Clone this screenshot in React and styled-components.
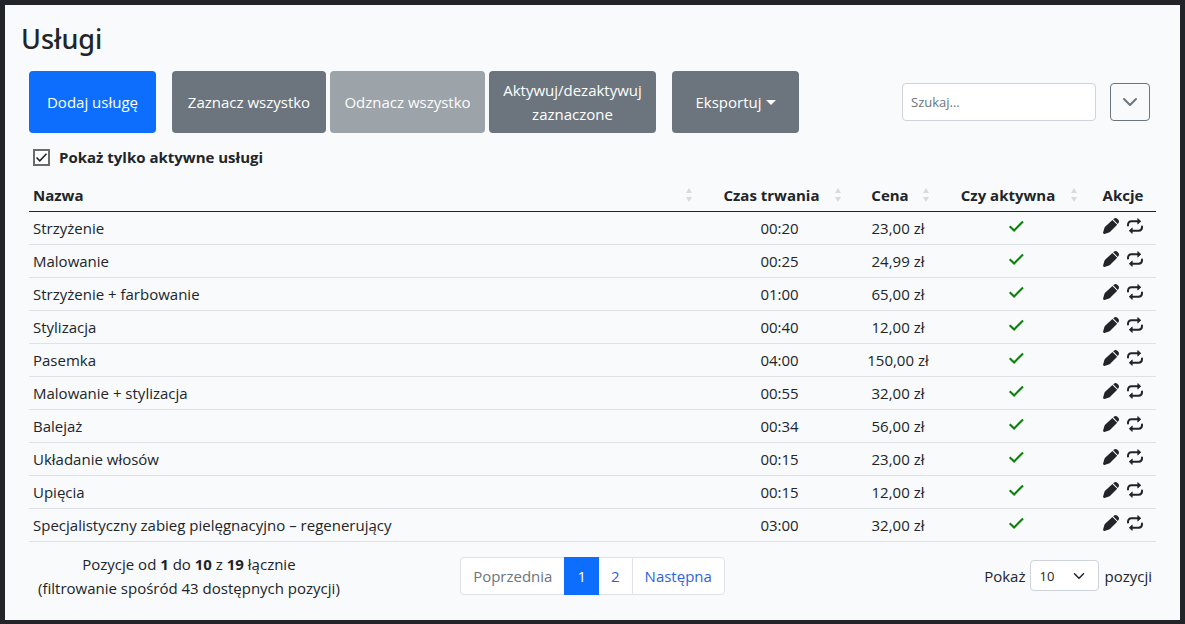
import React, { useState } from "react";
import styled, { createGlobalStyle, css } from "styled-components";

const GlobalStyle = createGlobalStyle`
  *, *::before, *::after { box-sizing: border-box; }
  body {
    margin: 0;
    background: #212529;
    color: #212529;
    font-family: "Open Sans", "Noto Sans", sans-serif;
    font-size: 15px;
    line-height: 24px;
  }
  button, input, select { font-family: inherit; }
`;

const Frame = styled.div`
  display: flex;
  min-height: 100vh;
  padding: 5px 5px 4px;
`;

const Panel = styled.main`
  flex: 1;
  min-width: 0;
  padding: 15px 24px 20px;
  background: #f8fafc;
`;

const Title = styled.h1`
  margin: 0 -8px 13px;
  font-family: "Noto Sans", "Open Sans", sans-serif;
  font-size: 27px;
  font-weight: 500;
  line-height: 38px;
`;

const Toolbar = styled.div`
  display: flex;
  align-items: center;
  gap: 16px;
`;

const ButtonGroup = styled.div`
  display: flex;
  gap: 4px;
`;

const Button = styled.button`
  display: flex;
  align-items: center;
  justify-content: center;
  gap: 4px;
  width: ${(p) => p.$width}px;
  height: 62px;
  padding: 0 4px;
  border: 0;
  border-radius: 4px;
  background: ${(p) => (p.$primary ? "#0d6efd" : "#6c757d")};
  color: #fff;
  font-size: 15px;
  line-height: 24px;
  white-space: nowrap;

  &:disabled {
    opacity: 0.65;
  }
`;

const Caret = styled.span`
  border: 5px solid transparent;
  border-top-color: currentColor;
  border-bottom: 0;
`;

const SearchArea = styled.div`
  display: flex;
  gap: 14px;
  margin-left: auto;
  padding-right: 6px;
`;

const fieldBorder = css`
  border: 1px solid #ced4da;
  border-radius: 4px;
  background: #fff;
`;

const SearchInput = styled.input`
  ${fieldBorder}
  width: 194px;
  height: 38px;
  padding: 0 8px;
  font-size: 13px;

  &::placeholder {
    color: #6c757d;
    opacity: 1;
  }
`;

const ToggleButton = styled.button`
  display: grid;
  place-items: center;
  width: 40px;
  height: 38px;
  padding: 0;
  border: 1px solid #6c757d;
  border-radius: 4px;
  background: transparent;
  color: #6c757d;
`;

const FilterLabel = styled.label`
  display: flex;
  align-items: center;
  gap: 9px;
  width: fit-content;
  margin: 12px 0 10px;
  padding-left: 4px;
  font-weight: 700;
`;

const CheckHolder = styled.span`
  position: relative;
  display: block;
  width: 17px;
  height: 17px;

  svg {
    position: absolute;
    inset: 0;
    pointer-events: none;
  }
`;

const CheckInput = styled.input`
  display: block;
  appearance: none;
  width: 17px;
  height: 17px;
  margin: 0;
  border: 2px solid #6b6b6b;
  background: #fff;
`;

const Table = styled.table`
  width: 100%;
  table-layout: fixed;
  border-collapse: separate;
  border-spacing: 0;
`;

const Col = styled.col`
  width: ${(p) => (p.$width ? `${p.$width}px` : "auto")};
`;

const HeadCell = styled.th`
  padding: 4px ${(p) => (p.$sortable ? 12 : 4)}px 4px 4px;
  border-bottom: 1px solid #212529;
  font-weight: 700;
  text-align: ${(p) => p.$align || "center"};
  white-space: nowrap;
`;

const HeadContent = styled.div`
  display: flex;
  align-items: center;

  span { flex: 1; }
`;

const Cell = styled.td`
  padding: 4px;
  border-bottom: 1px solid #dee2e6;
  text-align: ${(p) => p.$align || "center"};
`;

const IconLine = styled.div`
  display: flex;
  justify-content: center;
  align-items: center;
  gap: 8px;
  height: 24px;
  padding-bottom: 4px;
`;

const ActionButton = styled.button`
  display: block;
  padding: 0;
  border: 0;
  background: none;
  color: #212529;

  svg { display: block; }
`;

const Footer = styled.footer`
  display: grid;
  grid-template-columns: 1fr auto 1fr;
  align-items: start;
  padding-top: 10px;
`;

const Summary = styled.p`
  justify-self: start;
  margin: 0;
  padding-left: 9px;
  text-align: center;
`;

const Pagination = styled.nav`
  display: flex;
  margin-top: 5px;
`;

const PageLink = styled.a`
  height: 38px;
  padding: 6px 12px;
  margin-left: -1px;
  border: 1px solid ${(p) => (p.$active ? "#0d6efd" : "#dee2e6")};
  background: ${(p) => (p.$active ? "#0d6efd" : "#fff")};
  color: ${(p) => (p.$active ? "#fff" : p.$muted ? "#6c757d" : "#2f62e0")};
  text-decoration: none;
  z-index: ${(p) => (p.$active ? 1 : 0)};

  &:first-child { margin-left: 0; border-radius: 4px 0 0 4px; }
  &:last-child { border-radius: 0 4px 4px 0; }
`;

const PageSize = styled.label`
  display: flex;
  align-items: center;
  justify-self: end;
  gap: 5px;
  margin-top: 8px;
  padding-right: 4px;
`;

const SelectHolder = styled.span`
  position: relative;
  display: block;

  svg {
    position: absolute;
    top: 10px;
    right: 14px;
    pointer-events: none;
  }
`;

const Select = styled.select`
  ${fieldBorder}
  display: block;
  appearance: none;
  width: 69px;
  height: 31px;
  padding: 0 8px;
  color: #212529;
  font-size: 13px;
`;

const Chevron = ({ size }) => (
  <svg width={size} height={size} viewBox="0 0 16 16" fill="none" stroke="currentColor" strokeWidth="2" strokeLinecap="round" strokeLinejoin="round" aria-hidden="true">
    <path d="M2 5l6 6 6-6" />
  </svg>
);

const SortIcon = () => (
  <svg width="8" height="14" viewBox="0 0 8 14" fill="#d8dbde" aria-hidden="true">
    <path d="M4 0l3 5H1zM4 14l3-5H1z" />
  </svg>
);

const ActiveIcon = () => (
  <svg width="16" height="16" viewBox="0 0 16 16" fill="none" stroke="#0b800b" strokeWidth="2.1" role="img" aria-label="Tak">
    <path d="M1.7 8.2l4.4 4.3L15 3.6" />
  </svg>
);

const PencilIcon = () => (
  <svg width="16" height="16" viewBox="0 0 16 16" fill="currentColor" aria-hidden="true">
    <path d="M9.4 1.9l4.8 4.8-7 7c-.4.4-.8.7-1.3.9l-4.4 1.3c-.8.3-1.6-.5-1.4-1.3l1.2-4.4c.1-.5.4-1 .8-1.4z" />
    <path d="M10.2 1.2l.6-.5c1.1-.9 2.5-.9 3.5 0l1 1c.9 1 .9 2.4 0 3.5l-.5.7z" />
  </svg>
);

const RepeatIcon = () => (
  <svg width="16" height="16" viewBox="0 0 16 16" fill="none" stroke="currentColor" strokeWidth="2" strokeLinecap="round" aria-hidden="true">
    <path d="M1 7.4V6.7C1 4.6 2.3 3.3 4.4 3.3h7.4M15 8.6v.7c0 2.1-1.3 3.4-3.4 3.4H4.2" />
    <path d="M11 .8l2.8 2.5L11 5.8zM5 10.2l-2.8 2.5L5 15.2z" fill="currentColor" strokeWidth=".8" strokeLinejoin="round" />
  </svg>
);

const columns = [
  { label: "Nazwa", align: "left", sortable: true },
  { label: "Czas trwania", width: 149, sortable: true },
  { label: "Cena", width: 88, sortable: true },
  { label: "Czy aktywna", width: 148, sortable: true },
  { label: "Akcje", width: 66 },
];

const services = [
  ["Strzyżenie", "00:20", "23,00 zł"],
  ["Malowanie", "00:25", "24,99 zł"],
  ["Strzyżenie + farbowanie", "01:00", "65,00 zł"],
  ["Stylizacja", "00:40", "12,00 zł"],
  ["Pasemka", "04:00", "150,00 zł"],
  ["Malowanie + stylizacja", "00:55", "32,00 zł"],
  ["Balejaż", "00:34", "56,00 zł"],
  ["Układanie włosów", "00:15", "23,00 zł"],
  ["Upięcia", "00:15", "12,00 zł"],
  ["Specjalistyczny zabieg pielęgnacyjno – regenerujący", "03:00", "32,00 zł"],
];

export default function App() {
  const [onlyActive, setOnlyActive] = useState(true);

  return (
    <Frame>
      <GlobalStyle />
      <Panel>
        <Title>Usługi</Title>
        <Toolbar>
          <Button type="button" $primary $width={127}>Dodaj usługę</Button>
          <ButtonGroup>
            <Button type="button" $width={154}>Zaznacz wszystko</Button>
            <Button type="button" $width={155} disabled>Odznacz wszystko</Button>
            <Button type="button" $width={167}>
              <span>Aktywuj/dezaktywuj<br />zaznaczone</span>
            </Button>
          </ButtonGroup>
          <Button type="button" $width={127}>Eksportuj<Caret /></Button>
          <SearchArea>
            <SearchInput type="search" placeholder="Szukaj..." aria-label="Szukaj" />
            <ToggleButton type="button" aria-label="Rozwiń">
              <Chevron size={16} />
            </ToggleButton>
          </SearchArea>
        </Toolbar>

        <FilterLabel>
          <CheckHolder>
            <CheckInput type="checkbox" checked={onlyActive} onChange={(e) => setOnlyActive(e.target.checked)} />
            {onlyActive && (
              <svg width="17" height="17" viewBox="0 0 17 17" fill="none" stroke="#212529" strokeWidth="1.6" aria-hidden="true">
                <path d="M3.5 8.5l3.3 3.3 6.7-7" />
              </svg>
            )}
          </CheckHolder>
          Pokaż tylko aktywne usługi
        </FilterLabel>

        <Table>
          <colgroup>
            {columns.map((c) => <Col key={c.label} $width={c.width} />)}
          </colgroup>
          <thead>
            <tr>
              {columns.map((c) => (
                <HeadCell key={c.label} $align={c.align} $sortable={c.sortable} scope="col">
                  <HeadContent>
                    <span>{c.label}</span>
                    {c.sortable && <SortIcon />}
                  </HeadContent>
                </HeadCell>
              ))}
            </tr>
          </thead>
          <tbody>
            {services.map(([name, time, price]) => (
              <tr key={name}>
                <Cell $align="left">{name}</Cell>
                <Cell>{time}</Cell>
                <Cell>{price}</Cell>
                <Cell><IconLine><ActiveIcon /></IconLine></Cell>
                <Cell>
                  <IconLine>
                    <ActionButton type="button" aria-label="Edytuj"><PencilIcon /></ActionButton>
                    <ActionButton type="button" aria-label="Zmień aktywność"><RepeatIcon /></ActionButton>
                  </IconLine>
                </Cell>
              </tr>
            ))}
          </tbody>
        </Table>

        <Footer>
          <Summary>
            Pozycje od <b>1</b> do <b>10</b> z <b>19</b> łącznie
            <br />
            (filtrowanie spośród 43 dostępnych pozycji)
          </Summary>
          <Pagination aria-label="Strony">
            <PageLink href="#prev" $muted>Poprzednia</PageLink>
            <PageLink href="#1" $active aria-current="page">1</PageLink>
            <PageLink href="#2">2</PageLink>
            <PageLink href="#next">Następna</PageLink>
          </Pagination>
          <PageSize>
            Pokaż
            <SelectHolder>
              <Select defaultValue="10">
                <option>10</option>
                <option>25</option>
                <option>50</option>
              </Select>
              <Chevron size={12} />
            </SelectHolder>
            pozycji
          </PageSize>
        </Footer>
      </Panel>
    </Frame>
  );
}
